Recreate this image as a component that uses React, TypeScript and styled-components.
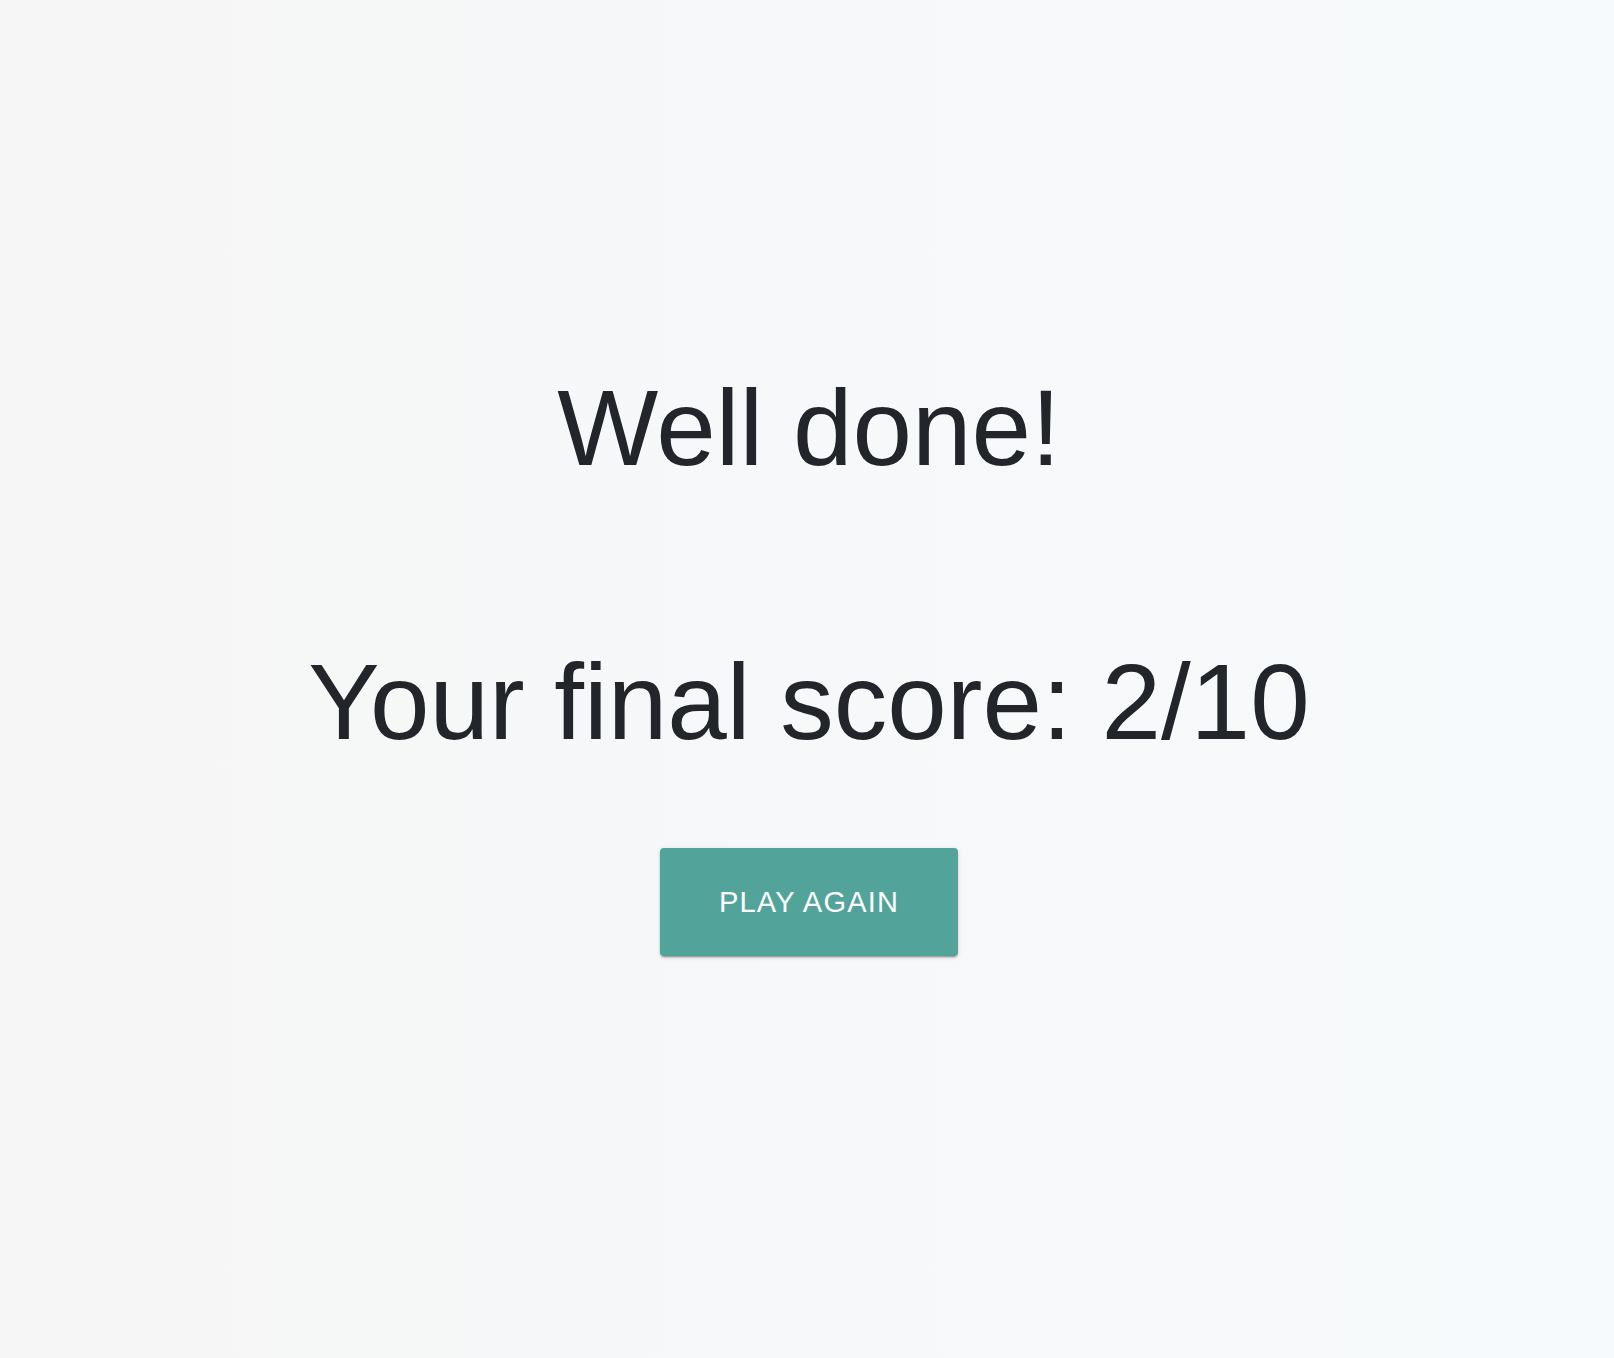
import React from "react";
import styled, { createGlobalStyle } from "styled-components";

const GlobalStyle = createGlobalStyle`
  html, body {
    margin: 0;
    padding: 0;
  }
  body {
    font-family: "Liberation Sans", Arial, Helvetica, sans-serif;
    color: #222529;
    background: linear-gradient(to right, #f6f6f6, #f7fafc);
    min-height: 100vh;
  }
`;

const Page = styled.main`
  min-height: 100vh;
  box-sizing: border-box;
  display: flex;
  flex-direction: column;
  align-items: center;
  padding-top: 367px;
  padding-left: 4px;
  background: linear-gradient(to right, #f6f6f6, #f7fafc);
`;

const Heading = styled.h1<{ $gap: number }>`
  margin: 0 0 ${(p) => p.$gap}px;
  font-family: "Liberation Sans", Arial, Helvetica, sans-serif;
  font-weight: 400;
  font-size: 107px;
  line-height: 123px;
  color: #222529;
  text-align: center;
  white-space: nowrap;
`;

const PlayButton = styled.button`
  width: 298px;
  height: 108px;
  border: none;
  border-radius: 4px;
  background: #52a49a;
  color: #ffffff;
  font-family: "Liberation Sans", Arial, Helvetica, sans-serif;
  font-size: 29px;
  letter-spacing: 1.2px;
  text-transform: uppercase;
  cursor: pointer;
  box-shadow: 0px 3px 1px -2px rgba(0, 0, 0, 0.2),
    0px 2px 2px 0px rgba(0, 0, 0, 0.14), 0px 1px 5px 0px rgba(0, 0, 0, 0.12);
`;

export default function App() {
  return (
    <>
      <GlobalStyle />
      <Page>
        <Heading $gap={151}>Well done!</Heading>
        <Heading $gap={84}>Your final score: 2/10</Heading>
        <PlayButton>Play again</PlayButton>
      </Page>
    </>
  );
}
